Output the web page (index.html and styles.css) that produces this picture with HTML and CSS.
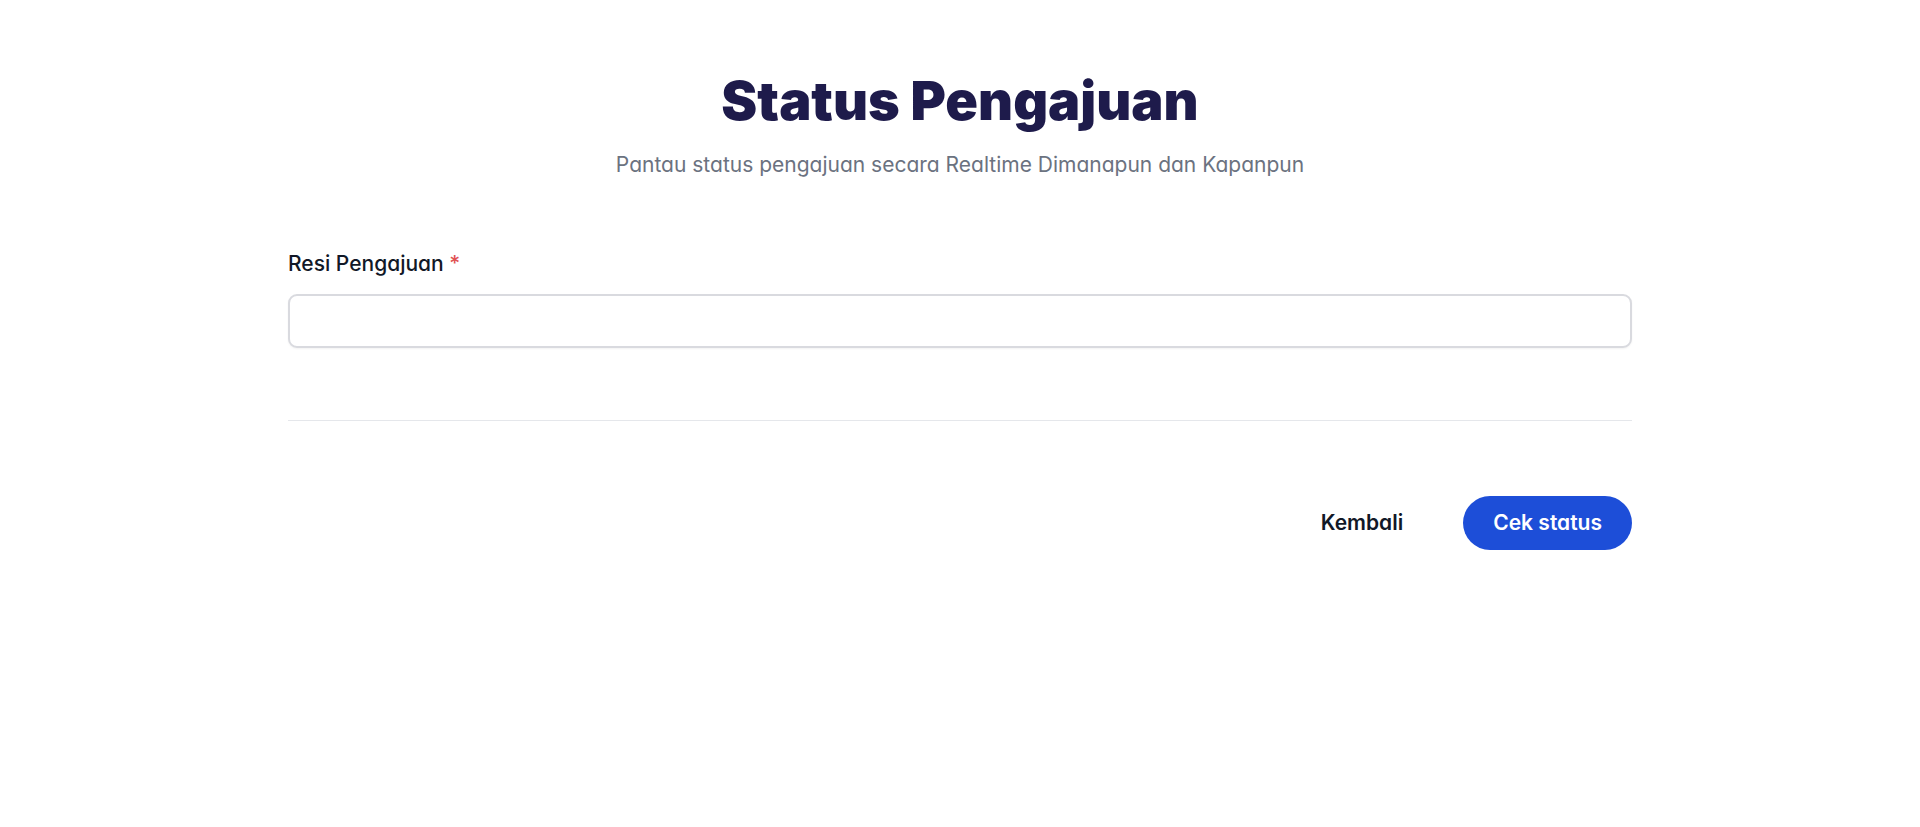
FILE: index.html
```html
<!DOCTYPE html>
<html lang="id">
<head>
<meta charset="utf-8">
<meta name="viewport" content="width=device-width, initial-scale=1">
<title>Status Pengajuan</title>
<link rel="stylesheet" href="styles.css">
</head>
<body>
<main class="page">
  <header class="intro">
    <h1 class="title">Status Pengajuan</h1>
    <p class="subtitle">Pantau status pengajuan secara Realtime Dimanapun dan Kapanpun</p>
  </header>
  <form class="form">
    <label class="label" for="resi">Resi Pengajuan <span class="required">*</span></label>
    <input class="input" id="resi" name="resi" type="text" required>
    <div class="actions">
      <a class="back" href="#">Kembali</a>
      <button class="submit" type="submit">Cek status</button>
    </div>
  </form>
</main>
</body>
</html>
```
FILE: styles.css
```css
* {
  box-sizing: border-box;
}

body {
  margin: 0;
  background: #fff;
  color: #111827;
  font-family: Inter, "Liberation Sans", sans-serif;
  font-feature-settings: "cv11";
  font-size: 21px;
  line-height: 32px;
}

.page {
  width: 70%;
  margin: 0 auto;
  padding: 71px 0;
}

.intro {
  text-align: center;
}

.title {
  margin: 0;
  color: #1e1b4b;
  font-feature-settings: normal;
  font-size: 54px;
  font-weight: 900;
  line-height: 60px;
}

.subtitle {
  margin: 18px 0 0;
  color: #6b7280;
}

.form {
  display: flex;
  flex-direction: column;
  margin-top: 67px;
}

.label {
  font-weight: 500;
}

.required {
  color: #e05252;
}

.input {
  width: 100%;
  height: 54px;
  margin-top: 14px;
  padding: 0 16px;
  border: 2px solid #d9dadf;
  border-radius: 9px;
  background: #fff;
  box-shadow: 0 1px 2px rgba(0, 0, 0, 0.05);
  color: inherit;
  font: inherit;
}

.actions {
  display: flex;
  justify-content: flex-end;
  align-items: center;
  gap: 60px;
  margin-top: 72px;
  padding-top: 75px;
  border-top: 1px solid #e5e7eb;
}

.back {
  color: inherit;
  font-weight: 600;
  text-decoration: none;
}

.submit {
  height: 54px;
  padding: 0 30px;
  border: 0;
  border-radius: 27px;
  background: #1d4ed8;
  color: #fff;
  font: inherit;
  font-feature-settings: inherit;
  font-weight: 600;
  cursor: pointer;
}
```
